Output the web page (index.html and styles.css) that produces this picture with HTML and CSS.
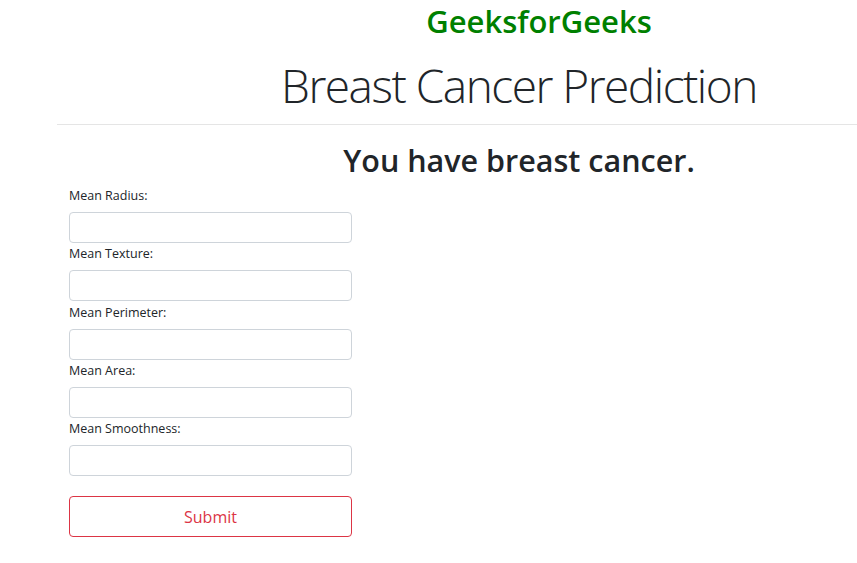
FILE: index.html
```html
<!DOCTYPE html>
<html>
<head>
<meta charset="utf-8">
<link rel="stylesheet" href="styles.css">
</head>
<body>
<div class="brand"><span>GeeksforGeeks</span></div>
<div class="head"><h1 class="title">Breast Cancer Prediction</h1></div>
<hr class="rule">
<div class="result"><h2>You have breast cancer.</h2></div>
<form class="form">
  <label class="lbl">Mean Radius:</label>
  <input class="field" type="text">
  <label class="lbl">Mean Texture:</label>
  <input class="field" type="text">
  <label class="lbl">Mean Perimeter:</label>
  <input class="field" type="text">
  <label class="lbl">Mean Area:</label>
  <input class="field" type="text">
  <label class="lbl">Mean Smoothness:</label>
  <input class="field" type="text">
  <button class="submit" type="button">Submit</button>
</form>
</body>
</html>
```
FILE: styles.css
```css
html, body {
  margin: 0;
  padding: 0;
  background: #fff;
}
body {
  font-family: "Open Sans", "Noto Sans", sans-serif;
  color: #212529;
}
.brand {
  padding-left: 221px;
  text-align: center;
  height: 42px;
  line-height: 42px;
}
.brand span {
  color: #008000;
  font-weight: 600;
  font-size: 31px;
}
.head {
  padding-left: 181px;
  text-align: center;
}
.title {
  margin: 0;
  font-weight: 300;
  font-size: 46px;
  letter-spacing: -1.5px;
  line-height: 86px;
  height: 82px;
}
.rule {
  margin: 0 0 0 57px;
  border: 0;
  border-top: 1px solid rgba(0,0,0,.1);
}
.result {
  padding-left: 181px;
  text-align: center;
}
.result h2 {
  margin: 0;
  font-weight: 600;
  font-size: 30.5px;
  line-height: 70px;
  height: 62px;
}
.form {
  margin-left: 69px;
  width: 283px;
  display: flex;
  flex-direction: column;
}
.lbl {
  font-size: 12.5px;
  line-height: 17px;
  margin-bottom: 8px;
}
.field {
  box-sizing: border-box;
  height: 31px;
  border: 1px solid #ced4da;
  border-radius: 4px;
  margin: 0 0 2.3px 0;
  padding: 0 10px;
  font-family: inherit;
}
.submit {
  box-sizing: border-box;
  margin-top: 18px;
  height: 41px;
  border: 1px solid #dc3545;
  border-radius: 4px;
  background: #fff;
  color: #dc3545;
  font-family: inherit;
  font-size: 16px;
}
```
